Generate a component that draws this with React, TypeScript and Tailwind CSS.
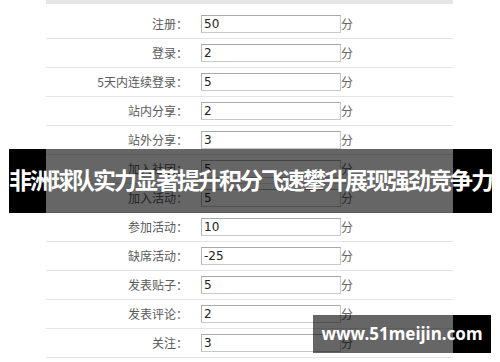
const rows = [
  { label: "注册：", value: "50" },
  { label: "登录：", value: "2" },
  { label: "5天内连续登录：", value: "5" },
  { label: "站内分享：", value: "2" },
  { label: "站外分享：", value: "3" },
  { label: "加入社团：", value: "5" },
  { label: "加入活动：", value: "5" },
  { label: "参加活动：", value: "10" },
  { label: "缺席活动：", value: "-25" },
  { label: "发表贴子：", value: "5" },
  { label: "发表评论：", value: "2" },
  { label: "关注：", value: "3" },
];

const cjk = { fontFamily: '"Noto Sans CJK SC", "Noto Sans", sans-serif' };

const ScoreRow = ({ label, value }: { label: string; value: string }) => {
  return (
    <div className="flex items-center h-[29px] border-b border-[#e4e4e4]">
      <div className="w-[142px] text-right text-[12px] text-[#5a5a5a]" style={cjk}>
        {label}
      </div>
      <div
        className="ml-[13px] w-[140px] h-[18px] border border-[#c9c9c9] border-t-[#a9a9a9] border-l-[#b5b5b5] bg-white flex items-center pl-[2px] text-[12px] text-[#222]"
        style={{ fontFamily: '"DejaVu Sans", sans-serif' }}
      >
        {value}
      </div>
      <span className="text-[12px] text-[#666] leading-none" style={cjk}>
        分
      </span>
    </div>
  );
};

export default function App() {
  return (
    <div className="relative w-[500px] h-[362px] overflow-hidden bg-white">
      <div className="ml-[46px] w-[407px]">
        <div className="h-[4px] bg-[#e5e5e5]" />
        <div className="h-[6px]" />
        {rows.map((r, i) => (
          <ScoreRow key={i} label={r.label} value={r.value} />
        ))}
      </div>

      {/* headline banner */}
      <div className="absolute left-[9px] top-[149px] w-[483px] h-[64px] flex">
        <div className="w-[37px] bg-black" />
        <div className="flex-1 bg-black/60" />
        <div className="w-[39px] bg-black" />
        <div className="absolute inset-0 flex items-center justify-center">
          <span
            className="whitespace-nowrap text-white font-bold text-[23px] tracking-[-2px] -mt-[4px]"
            style={cjk}
          >
            非洲球队实力显著提升积分飞速攀升展现强劲竞争力
          </span>
        </div>
      </div>

      {/* site watermark */}
      <div className="absolute left-[313px] top-[315px] w-[178px] h-[38px] flex">
        <div className="w-[140px] bg-black/60" />
        <div className="flex-1 bg-black" />
        <div className="absolute inset-0 flex items-center justify-center">
          <span
            className="text-white font-bold text-[17px] whitespace-nowrap"
            style={{ fontFamily: '"Noto Sans", sans-serif' }}
          >
            www.51meijin.com
          </span>
        </div>
      </div>
    </div>
  );
}
